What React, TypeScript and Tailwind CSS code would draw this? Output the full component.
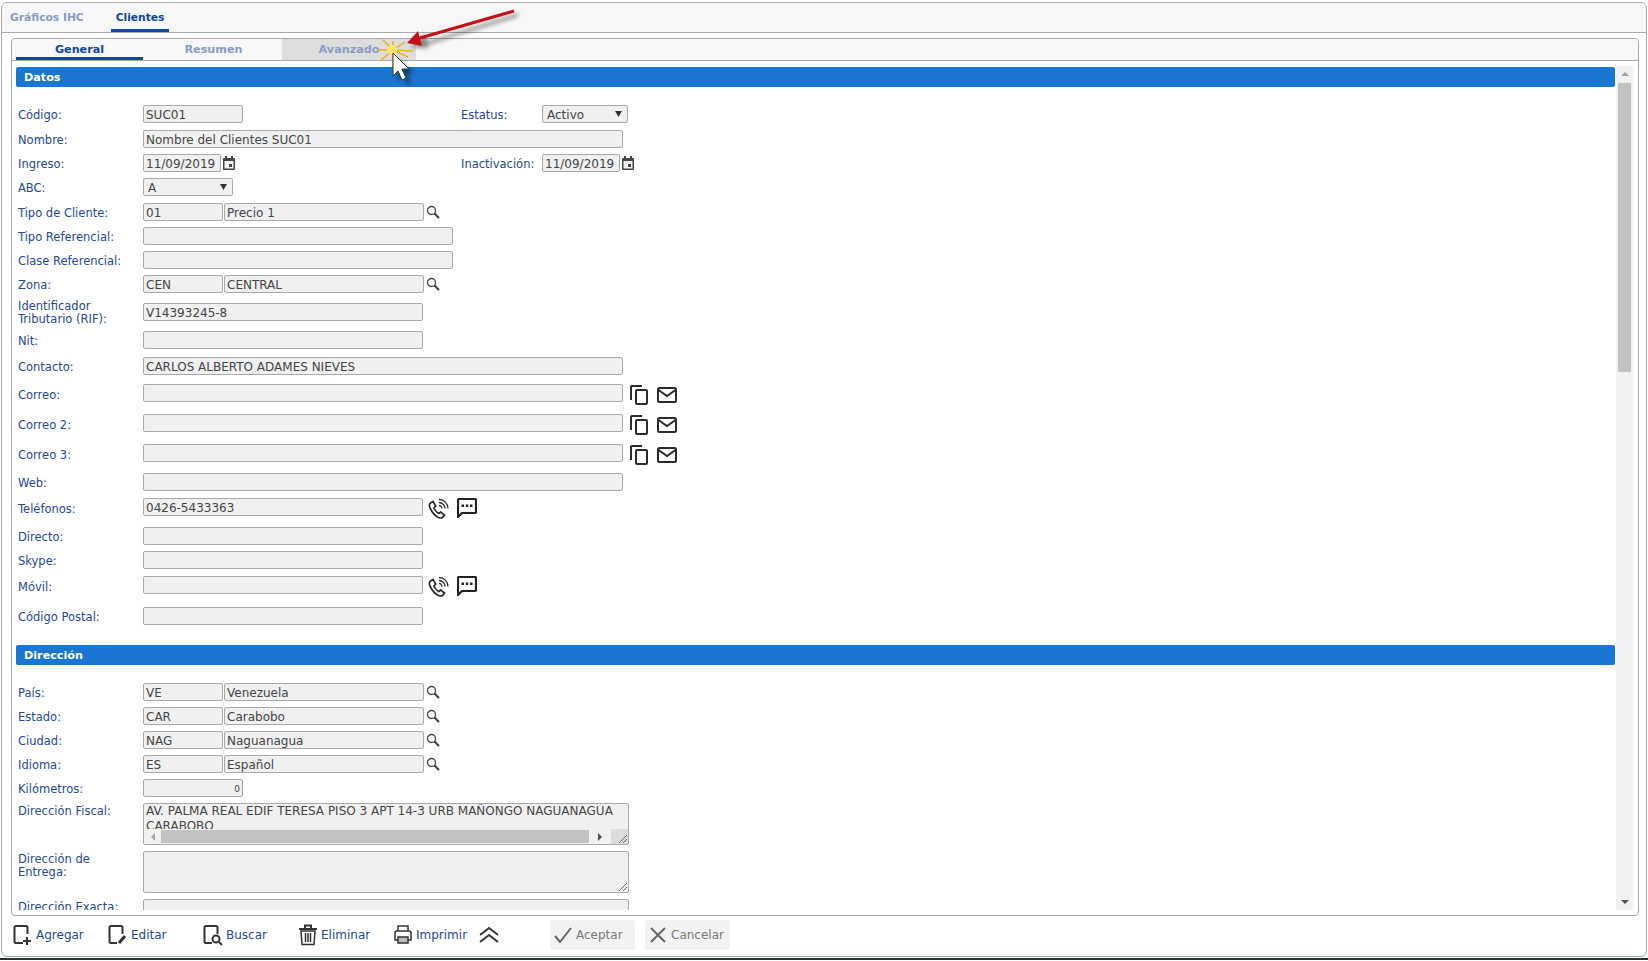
import { FC, ReactNode } from 'react';

const fontClass = "font-['DejaVu_Sans',Verdana,sans-serif]";

const Label: FC<{ children: ReactNode; className?: string }> = ({ children, className = 'w-[127px] pt-[2px]' }) => (
    <div className={`shrink-0 pl-[2px] text-[11.5px] leading-[13px] text-[#24479b] ${className}`}>{children}</div>
);

const Field: FC<{ value?: string; className: string }> = ({ value = '', className }) => (
    <div
        className={`shrink-0 h-[18px] overflow-hidden whitespace-nowrap rounded-[2px] border border-[#a9a9a9] bg-[#f0f0f0] pl-[2px] text-[12px] leading-[18px] text-[#444] ${className}`}
    >
        {value}
    </div>
);

const Select: FC<{ value: string; className: string }> = ({ value, className }) => (
    <div
        className={`shrink-0 h-[18px] flex items-center justify-between rounded-[2px] border border-[#a9a9a9] bg-[#f0f0f0] pl-[4px] pr-[5px] text-[12px] text-[#444] ${className}`}
    >
        <span className="pt-[2px]">{value}</span>
        <svg width="7" height="6" viewBox="0 0 7 6">
            <path d="M0 0h7L3.500 6z" fill="#333" />
        </svg>
    </div>
);

const CalendarIcon = () => (
    <svg className="ml-[2px] shrink-0" width="12" height="14" viewBox="0 0 12 14">
        <path d="M2 0h2v2h4V0h2v2h1a1 1 0 0 1 1 1v10a1 1 0 0 1-1 1H1a1 1 0 0 1-1-1V3a1 1 0 0 1 1-1h1z" fill="#444" />
        <rect x="1.500" y="5" width="9" height="7.500" fill="#f4f4f4" />
        <rect x="6" y="8" width="3" height="3" fill="#444" />
    </svg>
);

const SearchIcon = () => (
    <svg className="ml-[2px] shrink-0" width="14" height="14" viewBox="0 0 14 14" fill="none" stroke="#444">
        <circle cx="5.500" cy="5.500" r="4" strokeWidth="1.300" />
        <path d="M8.500 8.500 13 13" strokeWidth="2.200" />
    </svg>
);

const CopyIcon = () => (
    <svg className="ml-[7px] mt-[3px] shrink-0" width="18" height="20" viewBox="0 0 18 20" fill="none" stroke="#2b2b2b" strokeWidth="2">
        <path d="M12 1H2a1 1 0 0 0-1 1v13" />
        <rect x="6" y="5" width="11" height="14" rx="1" />
    </svg>
);

const MailIcon = () => (
    <svg className="ml-[9px] mt-[3px] shrink-0" width="20" height="16" viewBox="0 0 20 16" fill="none" stroke="#2b2b2b" strokeWidth="2">
        <rect x="1" y="1" width="18" height="14" rx="1.500" />
        <path d="M1.500 3 10 9l8.500-6" />
    </svg>
);

const PhoneIcon = () => (
    <svg className="ml-[5px] mt-[2px] shrink-0" width="22" height="21" viewBox="0 0 22 21" fill="none" stroke="#2b2b2b">
        <path
            d="M5 3.500 2.500 5C1 6 1 8 2.500 11c2 4 5 7 8 8.500 2 .8 4 .5 5-1l1-1.500-3.800-3-2 1.500c-1.500-.5-4-3.500-4.800-5.500l1.800-1.800z"
            strokeWidth="1.700"
        />
        <path d="M11 7.500a3 3 0 0 1 3 3M11 4.500a6 6 0 0 1 6 6M11 1.500a9 9 0 0 1 9 9" strokeWidth="1.300" />
    </svg>
);

const SmsIcon = () => (
    <svg className="ml-[7px] mt-[2px] shrink-0" width="20" height="20" viewBox="0 0 20 20">
        <path
            d="M2 1h16a1 1 0 0 1 1 1v12a1 1 0 0 1-1 1H5l-4 4V2a1 1 0 0 1 1-1z"
            fill="none"
            stroke="#222"
            strokeWidth="2.200"
        />
        <path d="M4.500 6.500h2.500v2.500H4.500zM8.800 6.500h2.500v2.500H8.800zM13 6.500h2.500v2.500H13z" fill="#222" />
    </svg>
);

const Row: FC<{ className: string; children: ReactNode }> = ({ className, children }) => (
    <div className={`flex h-[18px] items-center ${className}`}>{children}</div>
);

const SectionBar: FC<{ title: string; className?: string }> = ({ title, className = '' }) => (
    <div
        className={`flex h-[20px] w-[1599px] items-center rounded-[2px] bg-[#1976d2] pl-[8px] pt-[2px] text-[11.2px] font-bold text-white ${className}`}
    >
        {title}
    </div>
);

const LookupRow: FC<{ label: string; code: string; name: string; className: string }> = ({
    label,
    code,
    name,
    className
}) => (
    <Row className={className}>
        <Label>{label}</Label>
        <Field value={code} className="w-[80px]" />
        <Field value={name} className="ml-[1px] w-[200px]" />
        <SearchIcon />
    </Row>
);

const ResizeGrip = () => (
    <svg className="absolute bottom-[1px] right-[1px]" width="9" height="9" viewBox="0 0 9 9" stroke="#666" fill="none">
        <path d="M1 9 9 1M5 9l4-4" />
    </svg>
);

const ToolButton: FC<{ icon: ReactNode; label: string; className: string }> = ({ icon, label, className }) => (
    <div className={`flex items-center ${className}`}>
        {icon}
        <span className="ml-[3px] text-[12px] text-[#24479b]">{label}</span>
    </div>
);

const DocIcon: FC<{ extra: ReactNode }> = ({ extra }) => (
    <svg width="20" height="22" viewBox="0 0 20 22" fill="none" stroke="#333" strokeWidth="2">
        <path d="M9 19H3a1.500 1.500 0 0 1-1.500-1.500v-14A1.500 1.500 0 0 1 3 2h10a1.500 1.500 0 0 1 1.500 1.500V10" />
        {extra}
    </svg>
);

const Annotation = () => (
    <svg className="absolute left-[375px] top-0" width="155" height="90" viewBox="375 0 155 90">
        <defs>
            <filter id="soft" x="-30%" y="-30%" width="160%" height="160%">
                <feGaussianBlur stdDeviation="2" />
            </filter>
        </defs>
        <g filter="url(#soft)" opacity="0.45">
            <path d="M518 15 428 43" stroke="#000" strokeWidth="3" />
            <path d="m411 47 14-14 4 15z" fill="#000" />
            <path d="m398 58 0 23 5-5 4 9 4-2-4-9 7 0z" fill="#000" />
        </g>
        <path d="M514 11 420 38" stroke="#c80f14" strokeWidth="3" fill="none" />
        <path d="m407 43 11-12 4 15z" fill="#c80f14" />
        {/* starburst behind the cursor */}
        <path
            d="M393 50 380 61M393 50 383 40M393 50 405 42M393 50 393 41M393 50 393 67M393 50 413 51M393 50 408 57M393 50 378 50"
            stroke="#eeb010"
            strokeWidth="1.500"
            fill="none"
        />
        <circle cx="392" cy="50" r="5" fill="#ffe36a" />
        <path d="m393 53 0 23 5-5 4 9 4-2-4-9 7 0z" fill="#fff" stroke="#333" />
    </svg>
);

export default function App() {
    return (
        <div className={`relative h-[961px] w-[1648px] overflow-hidden bg-white ${fontClass}`}>
            <div className="ml-[1px] mt-[2px] flex h-[955px] w-[1646px] flex-col rounded-[6px] border border-[#a9a9a9]">
                <div className="flex h-[30px] shrink-0 items-end rounded-t-[6px] border-b border-[#a9a9a9] bg-[#f7f7f7] pl-[8px] text-[10.7px] font-bold">
                    <div className="flex h-[29px] w-[101px] items-center pt-[2px] text-[#8a9cc4]">Gráficos IHC</div>
                    <div className="flex h-[29px] w-[58px] items-center justify-center border-b-[3px] border-[#0d47a1] pt-[5px] text-[#0d47a1]">
                        Clientes
                    </div>
                </div>

                <div className="ml-[9px] mt-[5px] flex h-[878px] w-[1628px] flex-col rounded-[4px] border border-[#a9a9a9]">
                    <div className="flex h-[22px] shrink-0 rounded-t-[4px] border-b border-[#a9a9a9] bg-[#f7f7f7] pl-[4px] text-[11.2px] font-bold">
                        <div className="flex w-[127px] items-center justify-center border-b-[3px] border-[#0d47a1] pt-[5px] text-[#0d47a1]">
                            General
                        </div>
                        <div className="flex w-[139px] items-center justify-center pl-[2px] pt-[2px] text-[#8a9cc4]">
                            Resumen
                        </div>
                        <div className="flex w-[134px] items-center justify-center bg-[#dddddd] pt-[2px] text-[#8a9cc4]">
                            Avanzado
                        </div>
                    </div>

                    <div className="flex h-[849px] shrink-0 overflow-hidden pl-[4px] pt-[5px]">
                        <div className="w-[1600px] shrink-0 overflow-hidden pt-[1px]">
                            <SectionBar title="Datos" />

                            <Row className="mt-[18px]">
                                <Label>Código:</Label>
                                <Field value="SUC01" className="w-[100px]" />
                                <Label className="ml-[216px] w-[83px] pt-[2px]">Estatus:</Label>
                                <Select value="Activo" className="w-[86px]" />
                            </Row>
                            <Row className="mt-[7px]">
                                <Label>Nombre:</Label>
                                <Field value="Nombre del Clientes SUC01" className="w-[480px]" />
                            </Row>
                            <Row className="mt-[6px]">
                                <Label>Ingreso:</Label>
                                <Field value="11/09/2019" className="w-[78px]" />
                                <CalendarIcon />
                                <Label className="ml-[224px] w-[83px] pt-[2px]">Inactivación:</Label>
                                <Field value="11/09/2019" className="w-[78px]" />
                                <CalendarIcon />
                            </Row>
                            <Row className="mt-[6px]">
                                <Label>ABC:</Label>
                                <Select value="A" className="w-[90px]" />
                            </Row>
                            <LookupRow label="Tipo de Cliente:" code="01" name="Precio 1" className="mt-[7px]" />
                            <Row className="mt-[6px]">
                                <Label>Tipo Referencial:</Label>
                                <Field className="w-[310px]" />
                            </Row>
                            <Row className="mt-[6px]">
                                <Label>Clase Referencial:</Label>
                                <Field className="w-[310px]" />
                            </Row>
                            <LookupRow label="Zona:" code="CEN" name="CENTRAL" className="mt-[6px]" />
                            <Row className="mt-[10px]">
                                <Label>
                                    Identificador
                                    <br />
                                    Tributario (RIF):
                                </Label>
                                <Field value="V14393245-8" className="w-[280px]" />
                            </Row>
                            <Row className="mt-[10px]">
                                <Label>Nit:</Label>
                                <Field className="w-[280px]" />
                            </Row>
                            <Row className="mt-[8px]">
                                <Label>Contacto:</Label>
                                <Field value="CARLOS ALBERTO ADAMES NIEVES" className="w-[480px]" />
                            </Row>
                            <Row className="mt-[9px]">
                                <Label className="w-[127px] pt-[4px]">Correo:</Label>
                                <Field className="w-[480px]" />
                                <CopyIcon />
                                <MailIcon />
                            </Row>
                            <Row className="mt-[12px]">
                                <Label className="w-[127px] pt-[4px]">Correo 2:</Label>
                                <Field className="w-[480px]" />
                                <CopyIcon />
                                <MailIcon />
                            </Row>
                            <Row className="mt-[12px]">
                                <Label className="w-[127px] pt-[4px]">Correo 3:</Label>
                                <Field className="w-[480px]" />
                                <CopyIcon />
                                <MailIcon />
                            </Row>
                            <Row className="mt-[11px]">
                                <Label>Web:</Label>
                                <Field className="w-[480px]" />
                            </Row>
                            <Row className="mt-[7px]">
                                <Label className="w-[127px] pt-[4px]">Teléfonos:</Label>
                                <Field value="0426-5433363" className="w-[280px]" />
                                <PhoneIcon />
                                <SmsIcon />
                            </Row>
                            <Row className="mt-[11px]">
                                <Label>Directo:</Label>
                                <Field className="w-[280px]" />
                            </Row>
                            <Row className="mt-[6px]">
                                <Label>Skype:</Label>
                                <Field className="w-[280px]" />
                            </Row>
                            <Row className="mt-[7px]">
                                <Label className="w-[127px] pt-[4px]">Móvil:</Label>
                                <Field className="w-[280px]" />
                                <PhoneIcon />
                                <SmsIcon />
                            </Row>
                            <Row className="mt-[13px]">
                                <Label>Código Postal:</Label>
                                <Field className="w-[280px]" />
                            </Row>

                            <SectionBar title="Dirección" className="mt-[20px]" />

                            <LookupRow label="País:" code="VE" name="Venezuela" className="mt-[18px]" />
                            <LookupRow label="Estado:" code="CAR" name="Carabobo" className="mt-[6px]" />
                            <LookupRow label="Ciudad:" code="NAG" name="Naguanagua" className="mt-[6px]" />
                            <LookupRow label="Idioma:" code="ES" name="Español" className="mt-[6px]" />
                            <Row className="mt-[6px]">
                                <Label>Kilómetros:</Label>
                                <div className="h-[18px] w-[100px] rounded-[2px] border border-[#a9a9a9] bg-[#f0f0f0] pr-[2px] text-right text-[9px] leading-[18px] text-[#444]">
                                    0
                                </div>
                            </Row>

                            <div className="mt-[6px] flex h-[42px]">
                                <Label>Dirección Fiscal:</Label>
                                <div className="relative h-[42px] w-[486px] overflow-hidden rounded-[2px] border border-[#a9a9a9] bg-[#f0f0f0] pl-[2px] text-[12px] leading-[15px] whitespace-nowrap text-[#444]">
                                    AV. PALMA REAL EDIF TERESA PISO 3 APT 14-3 URB MAÑONGO NAGUANAGUA
                                    <br />
                                    CARABOBO
                                    <div className="absolute bottom-0 left-0 flex h-[15px] w-[484px] items-center bg-[#f1f1f1]">
                                        <div className="flex w-[17px] justify-center">
                                            <div className="h-0 w-0 border-y-[4px] border-r-[4px] border-y-transparent border-r-[#a3a3a3]" />
                                        </div>
                                        <div className="h-[13px] w-[428px] bg-[#c1c1c1]" />
                                        <div className="flex w-[22px] justify-center">
                                            <div className="h-0 w-0 border-y-[4px] border-l-[4px] border-l-[#505050] border-y-transparent" />
                                        </div>
                                        <div className="h-[15px] w-[17px] bg-[#dcdcdc]" />
                                    </div>
                                    <ResizeGrip />
                                </div>
                            </div>

                            <div className="mt-[6px] flex h-[42px]">
                                <Label>
                                    Dirección de
                                    <br />
                                    Entrega:
                                </Label>
                                <div className="relative h-[42px] w-[486px] rounded-[2px] border border-[#a9a9a9] bg-[#f0f0f0]">
                                    <ResizeGrip />
                                </div>
                            </div>

                            <div className="mt-[6px] flex h-[42px]">
                                <Label>Dirección Exacta:</Label>
                                <div className="h-[42px] w-[486px] rounded-[2px] border border-[#a9a9a9] bg-[#f0f0f0]" />
                            </div>
                        </div>

                        <div className="ml-0 flex h-[844px] w-[17px] shrink-0 flex-col items-center bg-[#f1f1f1] pt-[6px]">
                            <div className="h-0 w-0 border-x-[4px] border-b-[4px] border-x-transparent border-b-[#a3a3a3]" />
                            <div className="mt-[7px] h-[289px] w-[13px] bg-[#c1c1c1]" />
                            <div className="mt-auto mb-[6px] h-0 w-0 border-x-[4px] border-t-[4px] border-x-transparent border-t-[#505050]" />
                        </div>
                    </div>
                </div>

                <div className="ml-[11px] flex h-[37px] items-center">
                    <ToolButton
                        className="w-[95px]"
                        label="Agregar"
                        icon={
                            <DocIcon
                                extra={
                                    <>
                                        <path d="M10 19H2" />
                                        <path d="M14 13v8M10 17h8" />
                                    </>
                                }
                            />
                        }
                    />
                    <ToolButton
                        className="w-[95px]"
                        label="Editar"
                        icon={<DocIcon extra={<path d="m11 19 6-7" strokeWidth="3" />} />}
                    />
                    <ToolButton
                        className="w-[95px]"
                        label="Buscar"
                        icon={
                            <DocIcon
                                extra={
                                    <>
                                        <circle cx="13" cy="15" r="3.500" />
                                        <path d="m16 18 3 3" />
                                    </>
                                }
                            />
                        }
                    />
                    <ToolButton
                        className="w-[95px]"
                        label="Eliminar"
                        icon={
                            <svg width="20" height="22" viewBox="0 0 20 22" fill="none" stroke="#333" strokeWidth="1.500">
                                <path d="M1 5h18M7 4V1.500h6V4" strokeWidth="2" />
                                <path d="M3 7l1 13.500h12L17 7zM7.500 9v9M10 9v9M12.500 9v9" />
                            </svg>
                        }
                    />
                    <ToolButton
                        className="w-[86px]"
                        label="Imprimir"
                        icon={
                            <svg width="20" height="22" viewBox="0 0 20 22" fill="none" stroke="#333" strokeWidth="1.500">
                                <path d="M5 7V2h10v5M5 16H2V9a2 2 0 0 1 2-2h12a2 2 0 0 1 2 2v7h-3" />
                                <path d="M5 13h10v6H5z" fill="#bbb" />
                            </svg>
                        }
                    />
                    <svg width="20" height="18" viewBox="0 0 20 18" fill="none" stroke="#333" strokeWidth="2">
                        <path d="m1 9 9-7 9 7M1 16l9-7 9 7" />
                    </svg>
                    <div className="ml-[51px] flex h-[30px] w-[85px] items-center rounded-[2px] bg-[#f2f2f2] pl-[3px] text-[12px] text-[#777]">
                        <svg width="20" height="18" viewBox="0 0 20 18" fill="none" stroke="#666" strokeWidth="2">
                            <path d="m2 10 5 6L18 2" />
                        </svg>
                        <span className="ml-[3px]">Aceptar</span>
                    </div>
                    <div className="ml-[10px] flex h-[30px] w-[85px] items-center rounded-[2px] bg-[#f2f2f2] pl-[4px] text-[12px] text-[#777]">
                        <svg width="18" height="18" viewBox="0 0 18 18" fill="none" stroke="#666" strokeWidth="2">
                            <path d="m2 2 14 14M16 2 2 16" />
                        </svg>
                        <span className="ml-[4px]">Cancelar</span>
                    </div>
                </div>
            </div>
            <div className="mt-[1px] h-[2px] bg-[#26352c]" />
            <Annotation />
        </div>
    );
}
